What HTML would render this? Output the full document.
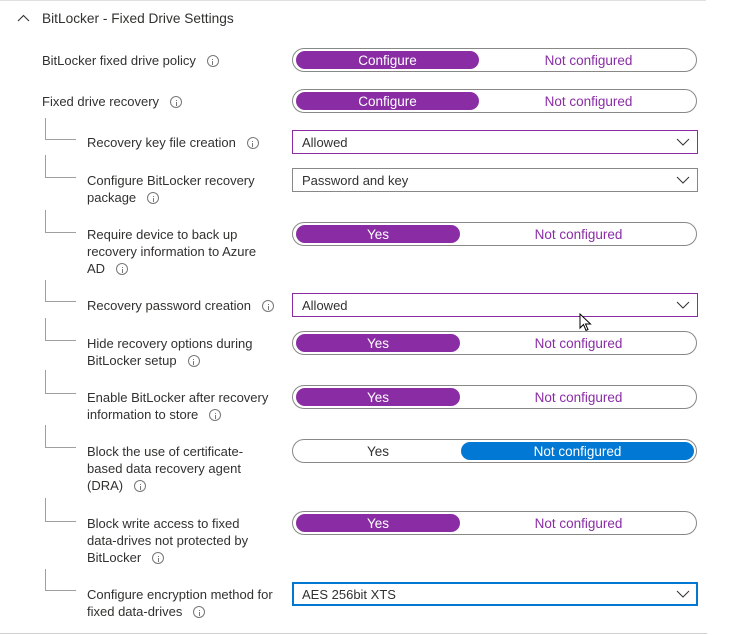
<!DOCTYPE html>
<html><head><meta charset="utf-8"><style>
body{margin:0;width:735px;height:635px;background:#fff;position:relative;overflow:hidden;font-family:"Liberation Sans",sans-serif;font-size:13px;color:#323130}
.a{position:absolute}
.lbl{position:absolute;line-height:17px;white-space:nowrap}
.i{display:inline-block;width:12px;height:12px;border:1px solid #777;border-radius:50%;vertical-align:-2px;margin-left:11px;position:relative;box-sizing:border-box}
.i:after{content:"";position:absolute;left:4.5px;top:4.5px;width:1px;height:4px;background:#777}
.i:before{content:"";position:absolute;left:4.5px;top:2.5px;width:1px;height:1px;background:#777}
.tg{position:absolute;left:292px;width:405px;height:24px;border:1px solid #8a8886;border-radius:12px;box-sizing:border-box;font-size:13.5px}
.p{position:absolute;top:2px;height:18px;border-radius:9px;background:#8a2da5;color:#fff;text-align:center;line-height:19px}
.o{position:absolute;top:2px;height:18px;line-height:19px;text-align:center;color:#8a2da5}
.dd{position:absolute;left:292px;width:406px;height:24px;border:1px solid #8a8886;box-sizing:border-box;line-height:23px;padding-left:9px}
.dd svg{position:absolute;right:7px;top:7px}
.v{position:absolute;left:45px;width:1px;background:#a19f9d}
.h{position:absolute;left:45px;width:31px;height:1px;background:#a19f9d}
</style></head><body>
<div class="a" style="left:0;top:0;width:706px;height:1px;background:#e1dfdd"></div>
<div class="a" style="left:0;top:633px;width:707px;height:1px;background:#d2d0ce"></div>
<svg class="a" style="left:17px;top:14px" width="13" height="8"><path d="M1 7 L6.5 1.5 L12 7" fill="none" stroke="#323130" stroke-width="1.1"/></svg>
<div class="lbl" style="left:42px;top:10px;font-size:13.7px">BitLocker - Fixed Drive Settings</div>

<div class="lbl" style="left:42px;top:52px">BitLocker fixed drive policy<span class="i"></span></div>
<div class="tg" style="top:48px"><div class="p" style="left:3px;width:183px">Configure</div><div class="o" style="left:190px;width:211px">Not configured</div></div>

<div class="lbl" style="left:42px;top:93px">Fixed drive recovery<span class="i"></span></div>
<div class="tg" style="top:89px"><div class="p" style="left:3px;width:183px">Configure</div><div class="o" style="left:190px;width:211px">Not configured</div></div>

<div class="v" style="top:118px;height:22px"></div><div class="h" style="top:139px"></div>
<div class="lbl" style="left:87px;top:134px">Recovery key file creation<span class="i"></span></div>
<div class="dd" style="top:130px;border-color:#8a2da5">Allowed<svg width="14" height="8"><path d="M1 1 L7 7 L13 1" fill="none" stroke="#323130"/></svg></div>

<div class="v" style="top:155px;height:23px"></div><div class="h" style="top:177px"></div>
<div class="lbl" style="left:87px;top:172px">Configure BitLocker recovery<br>package<span class="i"></span></div>
<div class="dd" style="top:168px">Password and key<svg width="14" height="8"><path d="M1 1 L7 7 L13 1" fill="none" stroke="#323130"/></svg></div>

<div class="v" style="top:210px;height:23px"></div><div class="h" style="top:232px"></div>
<div class="lbl" style="left:87px;top:226px">Require device to back up<br>recovery information to Azure<br>AD<span class="i"></span></div>
<div class="tg" style="top:222px"><div class="p" style="left:3px;width:164px">Yes</div><div class="o" style="left:170px;width:231px">Not configured</div></div>

<div class="v" style="top:280px;height:22px"></div><div class="h" style="top:301px"></div>
<div class="lbl" style="left:87px;top:297px">Recovery password creation<span class="i"></span></div>
<div class="dd" style="top:293px;border-color:#8a2da5">Allowed<svg width="14" height="8"><path d="M1 1 L7 7 L13 1" fill="none" stroke="#323130"/></svg></div>

<div class="v" style="top:318px;height:23px"></div><div class="h" style="top:340px"></div>
<div class="lbl" style="left:87px;top:335px">Hide recovery options during<br>BitLocker setup<span class="i"></span></div>
<div class="tg" style="top:331px"><div class="p" style="left:3px;width:164px">Yes</div><div class="o" style="left:170px;width:231px">Not configured</div></div>

<div class="v" style="top:370px;height:24px"></div><div class="h" style="top:393px"></div>
<div class="lbl" style="left:87px;top:389px">Enable BitLocker after recovery<br>information to store<span class="i"></span></div>
<div class="tg" style="top:385px"><div class="p" style="left:3px;width:164px">Yes</div><div class="o" style="left:170px;width:231px">Not configured</div></div>

<div class="v" style="top:425px;height:23px"></div><div class="h" style="top:447px"></div>
<div class="lbl" style="left:87px;top:443px">Block the use of certificate-<br>based data recovery agent<br>(DRA)<span class="i"></span></div>
<div class="tg" style="top:439px"><div class="o" style="left:3px;width:164px;color:#323130">Yes</div><div class="p" style="left:168px;width:233px;background:#0078d4">Not configured</div></div>

<div class="v" style="top:498px;height:24px"></div><div class="h" style="top:521px"></div>
<div class="lbl" style="left:87px;top:515px">Block write access to fixed<br>data-drives not protected by<br>BitLocker<span class="i"></span></div>
<div class="tg" style="top:511px"><div class="p" style="left:3px;width:164px">Yes</div><div class="o" style="left:170px;width:231px">Not configured</div></div>

<div class="v" style="top:569px;height:22px"></div><div class="h" style="top:590px"></div>
<div class="lbl" style="left:87px;top:586px">Configure encryption method for<br>fixed data-drives<span class="i"></span></div>
<div class="dd" style="top:582px;border:2px solid #0078d4;padding-left:8px;line-height:21px">AES 256bit XTS<svg width="14" height="8" style="right:6px;top:6px"><path d="M1 1 L7 7 L13 1" fill="none" stroke="#323130"/></svg></div>

<svg class="a" style="left:579px;top:313px" width="14" height="20"><path d="M1 1 L1 15 L4.5 11.5 L7 17.5 L9 16.5 L6.5 11 L11.5 11 Z" fill="#fff" stroke="#000" stroke-width="1"/></svg>
</body></html>
